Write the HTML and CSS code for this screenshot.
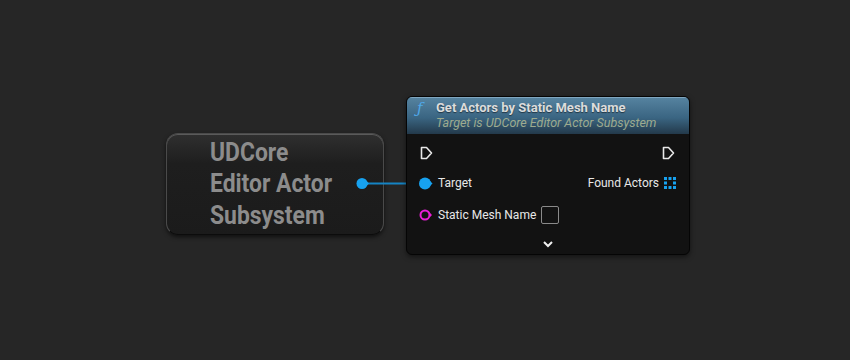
FILE: index.html
```html
<!DOCTYPE html>
<html>
<head>
<meta name="viewport" content="width=device-width, initial-scale=1">
<link rel="stylesheet" href="styles.css">
</head>
<body>

<div class="graph">

  <div class="node self-node">
    <div class="self-title">
      <span>UDCore</span>
      <span>Editor Actor</span>
      <span>Subsystem</span>
    </div>
  </div>

  <svg class="wire" width="850" height="360">
    <line x1="366" y1="183.5" x2="422" y2="183.5" stroke="#1584c4" stroke-width="2"/>
    <circle cx="362" cy="183.5" r="5.5" fill="#17a2f0"/>
    <path d="M366.5 181 L369 183.5 L366.5 186 Z" fill="#17a2f0"/>
  </svg>

  <div class="node func-node">
    <div class="func-header">
      <span class="fn-icon">&#402;</span>
      <div class="func-titles">
        <div class="func-name">Get Actors by Static Mesh Name</div>
        <div class="func-target">Target is UDCore Editor Actor Subsystem</div>
      </div>
    </div>

    <div class="func-body">
      <div class="row exec-row">
        <svg class="exec" width="13" height="14" viewBox="0 0 13 14">
          <path d="M1.5 1.5 H6.5 L11.5 7 L6.5 12.5 H1.5 Z" fill="none" stroke="#e8e8e8" stroke-width="1.6" stroke-linejoin="round"/>
        </svg>
        <svg class="exec" width="13" height="14" viewBox="0 0 13 14">
          <path d="M1.5 1.5 H6.5 L11.5 7 L6.5 12.5 H1.5 Z" fill="none" stroke="#e8e8e8" stroke-width="1.6" stroke-linejoin="round"/>
        </svg>
      </div>

      <div class="row">
        <div class="pin">
          <svg width="14" height="13" viewBox="0 0 14 13">
            <circle cx="6" cy="6.5" r="6" fill="#17a2f0"/>
            <path d="M11 4 L13.5 6.5 L11 9 Z" fill="#17a2f0"/>
          </svg>
          <span>Target</span>
        </div>
        <div class="pin">
          <span>Found Actors</span>
          <svg width="12" height="12" viewBox="0 0 12 12" fill="#17a2f0">
            <rect x="0" y="0" width="3" height="3"/>
            <rect x="4.5" y="0" width="3" height="3"/>
            <rect x="9" y="0" width="3" height="3"/>
            <rect x="0" y="4.5" width="3" height="3"/>
            <rect x="9" y="4.5" width="3" height="3"/>
            <rect x="0" y="9" width="3" height="3"/>
            <rect x="4.5" y="9" width="3" height="3"/>
            <rect x="9" y="9" width="3" height="3"/>
          </svg>
        </div>
      </div>

      <div class="row">
        <div class="pin">
          <svg width="14" height="12" viewBox="0 0 14 12">
            <circle cx="6" cy="6" r="4.5" fill="none" stroke="#e81fd6" stroke-width="2"/>
            <path d="M10.5 3.5 L13 6 L10.5 8.5 Z" fill="#e81fd6"/>
          </svg>
          <span>Static Mesh Name</span>
          <span class="textbox"></span>
        </div>
      </div>

      <div class="more">
        <svg width="12" height="8" viewBox="0 0 12 8">
          <path d="M2 2 L6 6 L10 2" fill="none" stroke="#f0f0f0" stroke-width="2"/>
        </svg>
      </div>
    </div>
  </div>

</div>

</body>
</html>
```

FILE: styles.css
```css
html, body {
    margin: 0;
    padding: 0;
}

body {
    background: #262626;
    font-family: Roboto, "Liberation Sans", sans-serif;
    width: 850px;
    height: 360px;
    overflow: hidden;
}

.graph {
    position: relative;
    width: 850px;
    height: 360px;
}

.wire {
    position: absolute;
    top: 0;
    left: 0;
}

.node {
    position: absolute;
    box-sizing: border-box;
}

/* self reference node */
.self-node {
    left: 166px;
    top: 133px;
    width: 218px;
    height: 102px;
    border-radius: 12px;
    background: linear-gradient(#2f2f2f, #1e1e1e 30%, #1b1b1b);
    border: 1px solid #4a4a4a;
    border-bottom-color: #0c0c0c;
    box-shadow: 0 2px 4px rgba(0,0,0,0.6), inset 0 1px 0 #5a5a5a;
    display: flex;
    align-items: center;
}

.self-title {
    display: flex;
    flex-direction: column;
    margin-left: 43px;
    font-weight: bold;
    font-size: 26px;
    line-height: 31.5px;
    color: #8c8c8c;
    transform: scaleX(0.88);
    transform-origin: left center;
    white-space: nowrap;
}

/* function node */
.func-node {
    left: 406px;
    top: 96px;
    width: 284px;
    height: 159px;
    border-radius: 6px;
    background: #121212;
    border: 1px solid #050505;
    box-shadow: 0 2px 5px rgba(0,0,0,0.5);
    overflow: hidden;
}

.func-header {
    height: 37px;
    display: flex;
    align-items: flex-start;
    padding: 1px 0 0 10px;
    box-sizing: border-box;
    background: linear-gradient(#55829f, #3a6582 55%, #23394a);
    border-top: 1px solid #7fa6c0;
}

.fn-icon {
    font-family: "DejaVu Serif", serif;
    font-style: italic;
    color: #4fa8e8;
    font-size: 15px;
    width: 18px;
    line-height: 18px;
    margin-right: 1px;
}

.func-name {
    font-weight: bold;
    font-size: 13px;
    color: #dcdcdc;
    line-height: 17px;
    text-shadow: 0 1px 1px rgba(0,0,0,0.5);
}

.func-target {
    font-style: italic;
    font-size: 12.5px;
    color: #9dab8f;
    line-height: 14px;
}

.func-body {
    padding: 12px 13px 0 12px;
}

.row {
    display: flex;
    justify-content: space-between;
    align-items: center;
    height: 32px;
    font-size: 12px;
    color: #e8e8e8;
}

.exec-row {
    height: 14px;
    margin-bottom: 7px;
    padding: 0 1px 0 1px;
}

.pin {
    display: flex;
    align-items: center;
    gap: 5px;
}

.textbox {
    width: 16px;
    height: 16px;
    border: 1px solid #8a8a8a;
    border-radius: 2px;
}

.more {
    display: flex;
    justify-content: center;
    padding-top: 9px;
}
```
